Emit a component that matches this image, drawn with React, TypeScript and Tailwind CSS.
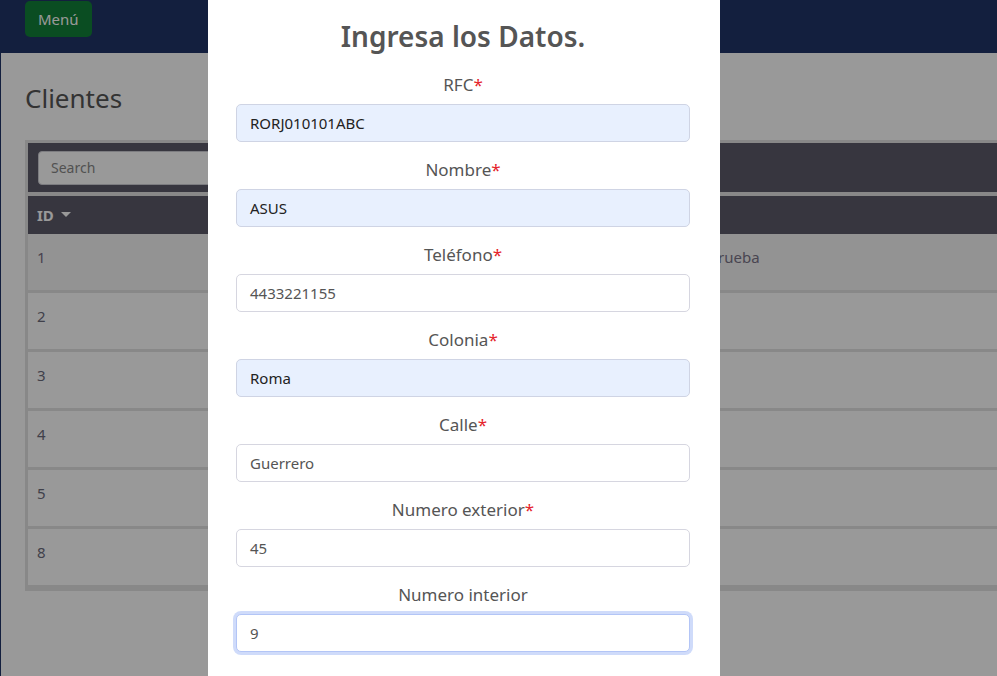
import React from "react";

const rows = ["1", "2", "3", "4", "5", "8"];

const fields = [
  { label: "RFC", value: "RORJ010101ABC", required: true, autofill: true },
  { label: "Nombre", value: "ASUS", required: true, autofill: true },
  { label: "Teléfono", value: "4433221155", required: true },
  { label: "Colonia", value: "Roma", required: true, autofill: true },
  { label: "Calle", value: "Guerrero", required: true },
  { label: "Numero exterior", value: "45", required: true },
  { label: "Numero interior", value: "9", focused: true },
];

function Field({
  label,
  value,
  required,
  autofill,
  focused,
}: {
  label: string;
  value: string;
  required?: boolean;
  autofill?: boolean;
  focused?: boolean;
}) {
  return (
    <div className="flex flex-col items-center">
      <label className="h-[30px] pt-[3px] text-[17px] leading-[24px] text-[#555]">
        {label}
        {required && <span className="text-[#e5242b]">*</span>}
      </label>
      <div
        className={[
          "mt-[4px] flex h-[38px] w-full items-center rounded-[5px] border px-[13px] text-[15px]",
          autofill ? "border-[#cfd4e4] bg-[#e8f0fe] text-[#222]" : "bg-white text-[#555]",
          focused
            ? "border-[#b3c5f6] shadow-[0_0_0_3px_rgba(168,190,246,0.55)]"
            : !autofill
              ? "border-[#d6d6e0]"
              : "",
        ].join(" ")}
      >
        {value}
      </div>
    </div>
  );
}

export default function App() {
  return (
    <div
      className="relative h-[676px] w-[997px] overflow-hidden bg-white"
      style={{ fontFamily: '"Noto Sans", "Open Sans", sans-serif' }}
    >
      {/* page behind the modal */}
      <div className="flex h-full flex-col">
        <nav className="flex h-[53px] shrink-0 items-start bg-[#213468] px-[25px] pt-[1px]">
          <button className="h-[36px] rounded-[5px] bg-[#128039] px-[13px] text-[15px] text-white">
            Menú
          </button>
        </nav>
        <div className="flex flex-1 border-l-[1px] border-[#213468]">
          <main className="flex-1 pl-[24px]">
            <h1 className="mt-[27px] text-[26px] leading-[36px] text-[#555]">Clientes</h1>
            <div className="mt-[24px] border-[3px] border-r-0 border-[#e3e3e3]">
              <div className="flex h-[49px] items-center bg-[#5c5a69] pl-[10px]">
                <div className="flex h-[34px] w-[300px] items-center rounded-[4px] border border-[#cfcfd6] bg-white px-[12px] text-[14px] text-[#888]">
                  Search
                </div>
              </div>
              <div className="h-[4px] bg-[#e3e3e3]" />
              <div className="flex h-[38px] items-center bg-[#5c5a69] pl-[9px] text-[15px] font-bold text-white">
                ID
                <svg width="10" height="6" viewBox="0 0 10 6" className="ml-[7px]">
                  <path d="M0 0 L10 0 L5 5 Z" fill="#fff" />
                </svg>
              </div>
              {rows.map((r, i) => (
                <div
                  key={r}
                  className={[
                    "relative h-[59px] border-b-[3px] border-[#e3e3e3] pl-[9px] pt-[12px] text-[15px] leading-[22px]",
                    i === 0 ? "bg-[#f5f5f5] text-[#7a6f84]" : "bg-white text-[#6c6c7c]",
                  ].join(" ")}
                >
                  {r}
                  {i === 0 && (
                    <span className="absolute left-[681px] top-[12px] text-[#7a7488]">Prueba</span>
                  )}
                </div>
              ))}
            </div>
          </main>
        </div>
      </div>

      {/* backdrop */}
      <div className="absolute inset-0 bg-black/40" />

      {/* modal */}
      <div className="absolute left-[208px] top-0 h-[676px] w-[512px] bg-white pl-[28px] pr-[30px]">
        <h2 className="pt-[18px] text-center text-[28px] font-semibold leading-[36px] text-[#555]">
          Ingresa los Datos.
        </h2>
        <div className="mt-[16px] flex flex-col gap-[13px]">
          {fields.map((f) => (
            <Field key={f.label} {...f} />
          ))}
        </div>
      </div>
    </div>
  );
}
